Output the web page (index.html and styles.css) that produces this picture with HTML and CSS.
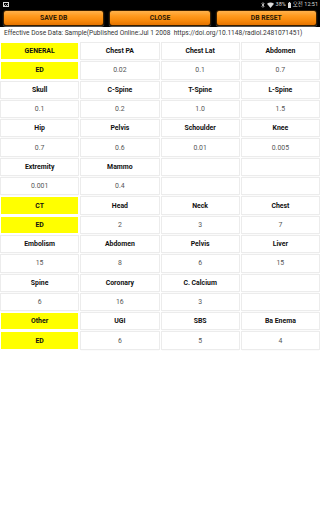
FILE: index.html
```html
<!DOCTYPE html>
<html>
<head>
<meta charset="utf-8">
<link rel="stylesheet" href="styles.css">
</head>
<body>
<div class="top">
  <div class="status">
    <svg class="pic" width="6" height="5" viewBox="0 0 6 5"><rect x="0.5" y="0.5" width="5" height="4" fill="none" stroke="#ddd" stroke-width="1"/><path d="M1 4 L2.5 2.5 L3.5 3.5 L4.5 2.5 L5 3" stroke="#ddd" stroke-width="0.8" fill="none"/></svg>
    <div class="right">
      <svg width="4" height="6" viewBox="0 0 4 6"><path d="M0.5 1.5 L3.2 4.2 L2 5.4 L2 0.6 L3.2 1.8 L0.5 4.5" stroke="#ddd" stroke-width="0.7" fill="none"/></svg>
      <svg width="7" height="6" viewBox="0 0 7 6"><path d="M0 1.8 Q3.5 -1 7 1.8 L3.5 6 Z" fill="#ddd"/></svg>
      <span>38%</span>
      <svg width="3" height="6" viewBox="0 0 3 6"><rect x="0.8" y="0" width="1.4" height="1" fill="#ddd"/><rect x="0" y="1" width="3" height="5" fill="#ddd"/></svg>
      <span>오전 12:51</span>
    </div>
  </div>
  <div class="buttons">
    <div class="btn">SAVE DB</div>
    <div class="btn">CLOSE</div>
    <div class="btn">DB RESET</div>
  </div>
</div>
<div class="info">Effective Dose Data: Sample(Published Online:Jul 1 2008&nbsp; https://doi.org/10.1148/radiol.2481071451)</div>
<div class="grid">
  <div class="cell hl">GENERAL</div><div class="cell h">Chest PA</div><div class="cell h">Chest Lat</div><div class="cell h">Abdomen</div>
  <div class="cell hl">ED</div><div class="cell v">0.02</div><div class="cell v">0.1</div><div class="cell v">0.7</div>
  <div class="cell h">Skull</div><div class="cell h">C-Spine</div><div class="cell h">T-Spine</div><div class="cell h">L-Spine</div>
  <div class="cell v">0.1</div><div class="cell v">0.2</div><div class="cell v">1.0</div><div class="cell v">1.5</div>
  <div class="cell h">Hip</div><div class="cell h">Pelvis</div><div class="cell h">Schoulder</div><div class="cell h">Knee</div>
  <div class="cell v">0.7</div><div class="cell v">0.6</div><div class="cell v">0.01</div><div class="cell v">0.005</div>
  <div class="cell h">Extremity</div><div class="cell h">Mammo</div><div class="cell h"></div><div class="cell h"></div>
  <div class="cell v">0.001</div><div class="cell v">0.4</div><div class="cell v"></div><div class="cell v"></div>
  <div class="cell hl">CT</div><div class="cell h">Head</div><div class="cell h">Neck</div><div class="cell h">Chest</div>
  <div class="cell hl">ED</div><div class="cell v">2</div><div class="cell v">3</div><div class="cell v">7</div>
  <div class="cell h">Embolism</div><div class="cell h">Abdomen</div><div class="cell h">Pelvis</div><div class="cell h">Liver</div>
  <div class="cell v">15</div><div class="cell v">8</div><div class="cell v">6</div><div class="cell v">15</div>
  <div class="cell h">Spine</div><div class="cell h">Coronary</div><div class="cell h">C. Calcium</div><div class="cell h"></div>
  <div class="cell v">6</div><div class="cell v">16</div><div class="cell v">3</div><div class="cell v"></div>
  <div class="cell hl">Other</div><div class="cell h">UGI</div><div class="cell h">SBS</div><div class="cell h">Ba Enema</div>
  <div class="cell hl">ED</div><div class="cell v">6</div><div class="cell v">5</div><div class="cell v">4</div>
</div>
</body>
</html>
```
FILE: styles.css
```css
html, body {
  margin: 0;
  padding: 0;
  background: #fff;
  width: 320px;
  height: 512px;
  overflow: hidden;
  font-family: Roboto, "Noto Sans CJK KR", sans-serif;
}
.top {
  background: #000;
  height: 27px;
}
.status {
  height: 9px;
  display: flex;
  align-items: center;
  justify-content: space-between;
  padding: 0 2px 0 3px;
  color: #ddd;
  font-size: 5.5px;
  line-height: 9px;
}
.status .right {
  display: flex;
  align-items: center;
  gap: 2px;
}
.buttons {
  display: grid;
  grid-template-columns: 1fr 1fr 1fr;
  gap: 5px;
  padding: 1px 3px 0 3px;
}
.btn {
  height: 14px;
  border: 1px solid #3a2000;
  border-radius: 3px;
  background: linear-gradient(#ffb24d 0%, #ff9a1e 35%, #f7880a 70%, #e57400 100%);
  box-shadow: 0 1px 1px rgba(255,255,255,0.35);
  display: flex;
  align-items: center;
  justify-content: center;
  font-weight: bold;
  font-size: 6.8px;
  color: #2a1a08;
}
.info {
  font-size: 6.6px;
  color: #333;
  padding: 0 0 0 4px;
  height: 16px;
  line-height: 13px;
  white-space: nowrap;
}
.grid {
  display: grid;
  grid-template-columns: repeat(4, 1fr);
  grid-auto-rows: 16.3px;
  gap: 3px;
  padding: 0 1px;
}
.cell {
  background: #fff;
  box-shadow: 0 0 0 1px #ececec, 0 1px 1px #e4e4e4;
  display: flex;
  align-items: center;
  justify-content: center;
  font-size: 6.9px;
  color: #111;
}
.cell.h {
  font-weight: bold;
}
.cell.v {
  color: #555;
}
.cell.hl {
  background: #ffff00;
  box-shadow: none;
  font-weight: bold;
  color: #111;
}
```
